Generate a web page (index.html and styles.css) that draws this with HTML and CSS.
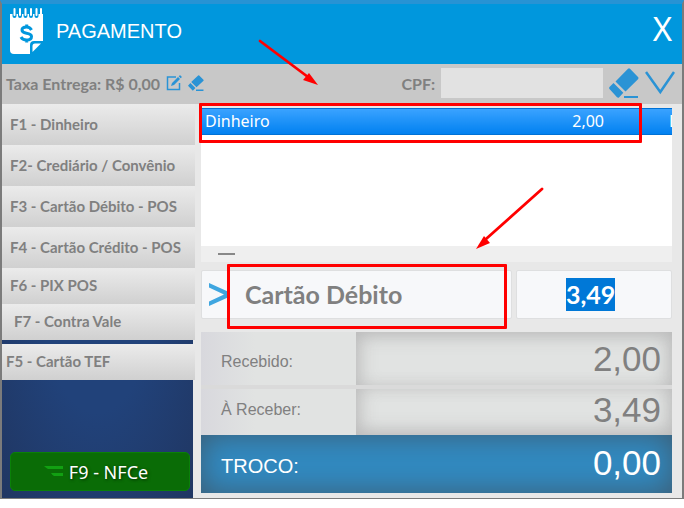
FILE: index.html
```html
<!DOCTYPE html>
<html lang="pt-BR">
<head>
    <meta charset="UTF-8">
    <meta name="viewport" content="width=device-width, initial-scale=1.0">
    <title>Pagamento</title>
    <link rel="stylesheet" href="styles.css">
</head>
<body>
    <div class="window">
        <header class="header">
            <svg class="logo" width="34" height="47" viewBox="0 0 34 47" aria-hidden="true">
                <path fill="#fff" d="M0 6H33V33L22 46H4Q0 46 0 42Z"/>
                <g stroke="#0097dd" stroke-width="4" stroke-linecap="round">
                    <path d="M4.500 4V8M10 4V8M15.500 4V8M21 4V8M26.500 4V8"/>
                </g>
                <g stroke="#fff" stroke-width="2" stroke-linecap="round">
                    <path d="M4.500 1V7M10 1V7M15.500 1V7M21 1V7M26.500 1V7M31 1V7"/>
                </g>
                <path fill="#0097dd" d="M20 47V37Q20 33 24 33H34V47Z"/>
                <path fill="#fff" d="M22.500 44V38Q22.500 35.500 25 35.500H31Z"/>
                <path fill="none" stroke="#0097dd" stroke-width="3" d="M21.500 22Q20 19 16.500 19Q12 19 12 22Q12 24.500 16.500 25.200Q21.500 26 21.500 28.500Q21.500 32 16.500 32Q12.500 32 11 29M16.700 16.500V19M16.700 32V34.500"/>
            </svg>
            <h1>PAGAMENTO</h1>
            <button type="button" class="close" aria-label="Fechar">X</button>
        </header>

        <div class="toolbar">
            <span class="fee">Taxa Entrega: R$ 0,00</span>
            <button type="button" class="icon-btn" aria-label="Editar taxa">
                <svg width="16" height="16" viewBox="0 0 16 16">
                    <path fill="none" stroke="#2a93d5" stroke-width="1.500" d="M10 2H1.500V14.500H13.500V8"/>
                    <path fill="#2a93d5" d="M5 11L6 8L12 2L14 4L8 10ZM12.700 1.300L13.500 .500Q14 0 14.500 .500L15.500 1.500Q16 2 15.500 2.500L14.700 3.300Z"/>
                </svg>
            </button>
            <button type="button" class="icon-btn" aria-label="Limpar taxa">
                <svg width="16" height="16" viewBox="0 0 30 30">
                    <path fill="#2a93d5" d="M6 13L19 1Q20 0 21 1L29 9Q30 10 29 11L16 23ZM4.500 15L14 24.500L9 29.500L0 20ZM15 27H29V30H15Z"/>
                </svg>
            </button>
            <label for="cpf" class="cpf-label">CPF:</label>
            <input type="text" id="cpf" class="cpf">
            <button type="button" class="icon-btn" aria-label="Limpar CPF">
                <svg width="30" height="30" viewBox="0 0 30 30">
                    <path fill="#2a93d5" d="M6.500 13.500L19 .700Q20 0 21 .700L29 9Q30 10 29 11.200L16.500 23.500ZM4.500 15L14.300 24.800L10 29.500Q9 30 8 29.300L.500 21Q-.200 20 .500 19ZM15 28H29V30H15Z"/>
                </svg>
            </button>
            <button type="button" class="icon-btn" aria-label="Expandir">
                <svg width="30" height="30" viewBox="0 0 30 30">
                    <path fill="none" stroke="#2a93d5" stroke-width="2.500" d="M1 4L15.300 24L29 4"/>
                </svg>
            </button>
        </div>

        <div class="content">
            <nav class="sidebar">
                <button type="button" class="pay-btn">F1 - Dinheiro</button>
                <button type="button" class="pay-btn">F2- Crediário / Convênio</button>
                <button type="button" class="pay-btn">F3 - Cartão Débito - POS</button>
                <button type="button" class="pay-btn">F4 - Cartão Crédito - POS</button>
                <button type="button" class="pay-btn compact">F6 - PIX POS</button>
                <button type="button" class="pay-btn compact indent">F7 - Contra Vale</button>
                <button type="button" class="pay-btn compact tef">F5 - Cartão TEF</button>
                <button type="button" class="nfce">
                    <svg width="19" height="12" viewBox="0 0 19 12" aria-hidden="true">
                        <path fill="#12a012" d="M0 0H19V3H4Q2 2 0 0ZM7 7H19V10H10Q8 9 7 7Z"/>
                    </svg>
                    F9 - NFCe
                </button>
            </nav>

            <main class="main">
                <div class="payments">
                    <table>
                        <tr>
                            <td>Dinheiro</td>
                            <td class="amount">2,00</td>
                            <td class="cut"><div>D</div></td>
                        </tr>
                    </table>
                    <div class="scroll"><span></span></div>
                    <div class="mark mark-payment"></div>
                </div>

                <div class="entry">
                    <div class="field method">
                        <svg width="21" height="24" viewBox="0 0 21 24" aria-hidden="true">
                            <path fill="#3fa6e0" d="M0 0L21 9.500V13.500L0 23V18.500L15 11.500L0 4.500Z"/>
                        </svg>
                        <input type="text" value="Cartão Débito" aria-label="Forma de pagamento">
                        <div class="mark mark-method"></div>
                    </div>
                    <div class="field value">
                        <input type="text" id="valor" value="3,49" aria-label="Valor">
                    </div>
                </div>

                <dl class="totals">
                    <div class="total received">
                        <dt>Recebido:</dt>
                        <dd>2,00</dd>
                    </div>
                    <div class="total pending">
                        <dt>À Receber:</dt>
                        <dd>3,49</dd>
                    </div>
                    <div class="total change">
                        <dt>TROCO:</dt>
                        <dd>0,00</dd>
                    </div>
                </dl>
            </main>
        </div>

        <!-- Setas de destaque -->
        <svg class="arrow arrow-top" width="62" height="48" viewBox="0 0 62 48" aria-hidden="true">
            <path stroke="#f00" stroke-width="2.800" stroke-linecap="round" d="M2 2L50 38"/>
            <path fill="#f00" d="M60 46L45 41L51 34Z"/>
        </svg>
        <svg class="arrow arrow-method" width="70" height="64" viewBox="0 0 70 64" aria-hidden="true">
            <path stroke="#f00" stroke-width="2.800" stroke-linecap="round" d="M67 2L11 52"/>
            <path fill="#f00" d="M1 62L9 49L15 56Z"/>
        </svg>
    </div>

    <script>
        // O valor ja abre selecionado para digitar por cima
        document.getElementById('valor').select();
    </script>
</body>
</html>
```
FILE: styles.css
```css
* {
    box-sizing: border-box;
}
body {
    margin: 0;
    background: #fff;
    color: #808080;
    font-family: "Liberation Sans", Arial, sans-serif;
}
button, input {
    font: inherit;
    color: inherit;
    border: none;
    border-radius: 0;
    padding: 0;
    background: none;
    outline: none;
}
button {
    cursor: pointer;
}
svg {
    display: block;
}
.window {
    position: relative;
    background: #e8e8e8;
    border: 2px solid #7b7b7b;
    border-top: 4px solid #2793d4;
    border-bottom-width: 1px;
}

/* Cabecalho */
.header {
    display: flex;
    align-items: center;
    gap: 12px;
    height: 60px;
    padding: 0 10px 5px 8px;
    background: #0097dd;
    color: #fff;
}
.header h1 {
    flex: 1;
    margin: 0;
    font-size: 20px;
    font-weight: normal;
}
.close {
    padding-bottom: 5px;
    font-family: "Noto Sans", sans-serif;
    font-size: 33px;
    line-height: 40px;
}

/* Barra da taxa e CPF */
.toolbar {
    display: flex;
    align-items: center;
    gap: 6px;
    height: 40px;
    padding: 0 7px 2px 4px;
    background: #c8c8c8;
    font-family: Lato, sans-serif;
    font-size: 16px;
    font-weight: bold;
}
.cpf-label {
    margin-left: auto;
}
.cpf {
    width: 162px;
    height: 30px;
    padding: 0 6px;
    background: #e2e2e2;
}

.content {
    display: flex;
}

/* Formas de pagamento */
.sidebar {
    display: flex;
    flex-direction: column;
    width: 193px;
    background: radial-gradient(ellipse at center, #21427a 40%, #203662 100%) no-repeat;
    background-size: calc(100% - 2px) 100%;
}
.pay-btn {
    height: 41px;
    padding: 0 8px 2px;
    background: linear-gradient(#ebebeb, #d0d0d0);
    font-family: Lato, sans-serif;
    font-size: 15px;
    font-weight: bold;
    text-align: left;
    white-space: nowrap;
}
.compact {
    height: 36px;
}
.indent {
    padding-left: 12px;
}
.tef {
    margin-top: 4px;
    padding-left: 4px;
}
.nfce {
    display: flex;
    align-items: center;
    justify-content: center;
    gap: 6px;
    height: 39px;
    margin: auto 5px 7px 8px;
    padding-right: 8px;
    border: 1px solid #0a8008;
    border-radius: 5px;
    background: #0a6c06;
    color: #fff;
    font-family: "Noto Sans", sans-serif;
    font-size: 18px;
    text-shadow: 1px 1px 3px #003000;
}

/* Area principal */
.main {
    flex: 1;
    min-width: 0;
    padding: 4px 10px 5px 6px;
}
.payments {
    position: relative;
    display: flex;
    flex-direction: column;
    height: 154px;
    background: #fff;
}
.payments table {
    width: 100%;
    table-layout: fixed;
    border-collapse: collapse;
    background: linear-gradient(#3ba3ff, #0080f0);
    color: #fff;
    font-family: "Noto Sans", sans-serif;
    font-size: 16px;
    line-height: 25px;
}
.payments td {
    padding: 0 4px;
    border-top: 1px solid #0071d5;
    border-bottom: 1px solid #0071d5;
}
.payments .amount {
    text-align: right;
}
.payments .cut {
    width: 64px;
    padding: 0;
}
.cut div {
    width: 3px;
    margin-left: auto;
    overflow: hidden;
}
.scroll {
    height: 16px;
    margin-top: auto;
    padding: 7px 17px;
    background: #efefef;
}
.scroll span {
    display: block;
    width: 17px;
    height: 2px;
    background: #888;
}

.entry {
    display: grid;
    grid-template-columns: 2fr 1fr;
    gap: 4px;
    margin-top: 8px;
}
.field {
    position: relative;
    display: flex;
    align-items: center;
    height: 49px;
    padding: 0 7px;
    border: 1px solid #dedfe0;
    border-radius: 2px;
    background: #f7f8fa;
    font-family: Lato, sans-serif;
    font-size: 25px;
    font-weight: bold;
}
.field input {
    width: 100%;
    min-width: 0;
    line-height: 33px;
}
.method {
    gap: 15px;
}
.method svg {
    flex: none;
}
.value input {
    padding-right: 7px;
    text-align: center;
}
.value input::selection {
    background: #0078d7;
    color: #fff;
}

/* Totais */
.totals {
    margin: 13px 0 0;
}
.total {
    display: flex;
    height: 53px;
}
.total dt, .total dd {
    display: flex;
    align-items: center;
    margin: 0;
}
.total dt {
    width: 155px;
    padding-left: 20px;
    background: linear-gradient(90deg, #d8d8dd, #e1e3e2 35%);
    font-size: 16px;
}
.total dd {
    flex: 1;
    justify-content: flex-end;
    padding-right: 11px;
    background: #e1e3e2;
    box-shadow: inset 0 10px 20px -8px #bbb, inset 10px 0 20px -8px #bbb, inset -10px 0 20px -8px #bbb;
    font-size: 35px;
}
.received dt {
    padding-top: 6px;
}
.pending {
    height: 50px;
    border-top: 4px solid #dadada;
}
.pending dt, .pending dd {
    padding-bottom: 4px;
}
.pending dd {
    box-shadow: inset 0 -10px 20px -8px #bbb, inset 10px 0 20px -8px #bbb, inset -10px 0 20px -8px #bbb;
}
.change {
    height: 58px;
    background: #318ac1;
    box-shadow: inset 0 0 30px #3d5c72;
    color: #fff;
}
.change dt {
    padding-top: 4px;
    background: none;
    font-size: 20px;
}
.change dd {
    padding-bottom: 2px;
    background: none;
    box-shadow: none;
}

/* Marcacoes em vermelho */
.mark {
    position: absolute;
    border: 3px solid #f00;
    border-radius: 1px;
    pointer-events: none;
}
.mark-payment {
    top: -5px;
    left: -2px;
    right: 30px;
    height: 40px;
}
.mark-method {
    top: -7px;
    left: 25px;
    right: 4px;
    height: 65px;
}
.arrow {
    position: absolute;
    pointer-events: none;
}
.arrow-top {
    top: 35px;
    left: 256px;
}
.arrow-method {
    top: 183px;
    left: 473px;
}
```
